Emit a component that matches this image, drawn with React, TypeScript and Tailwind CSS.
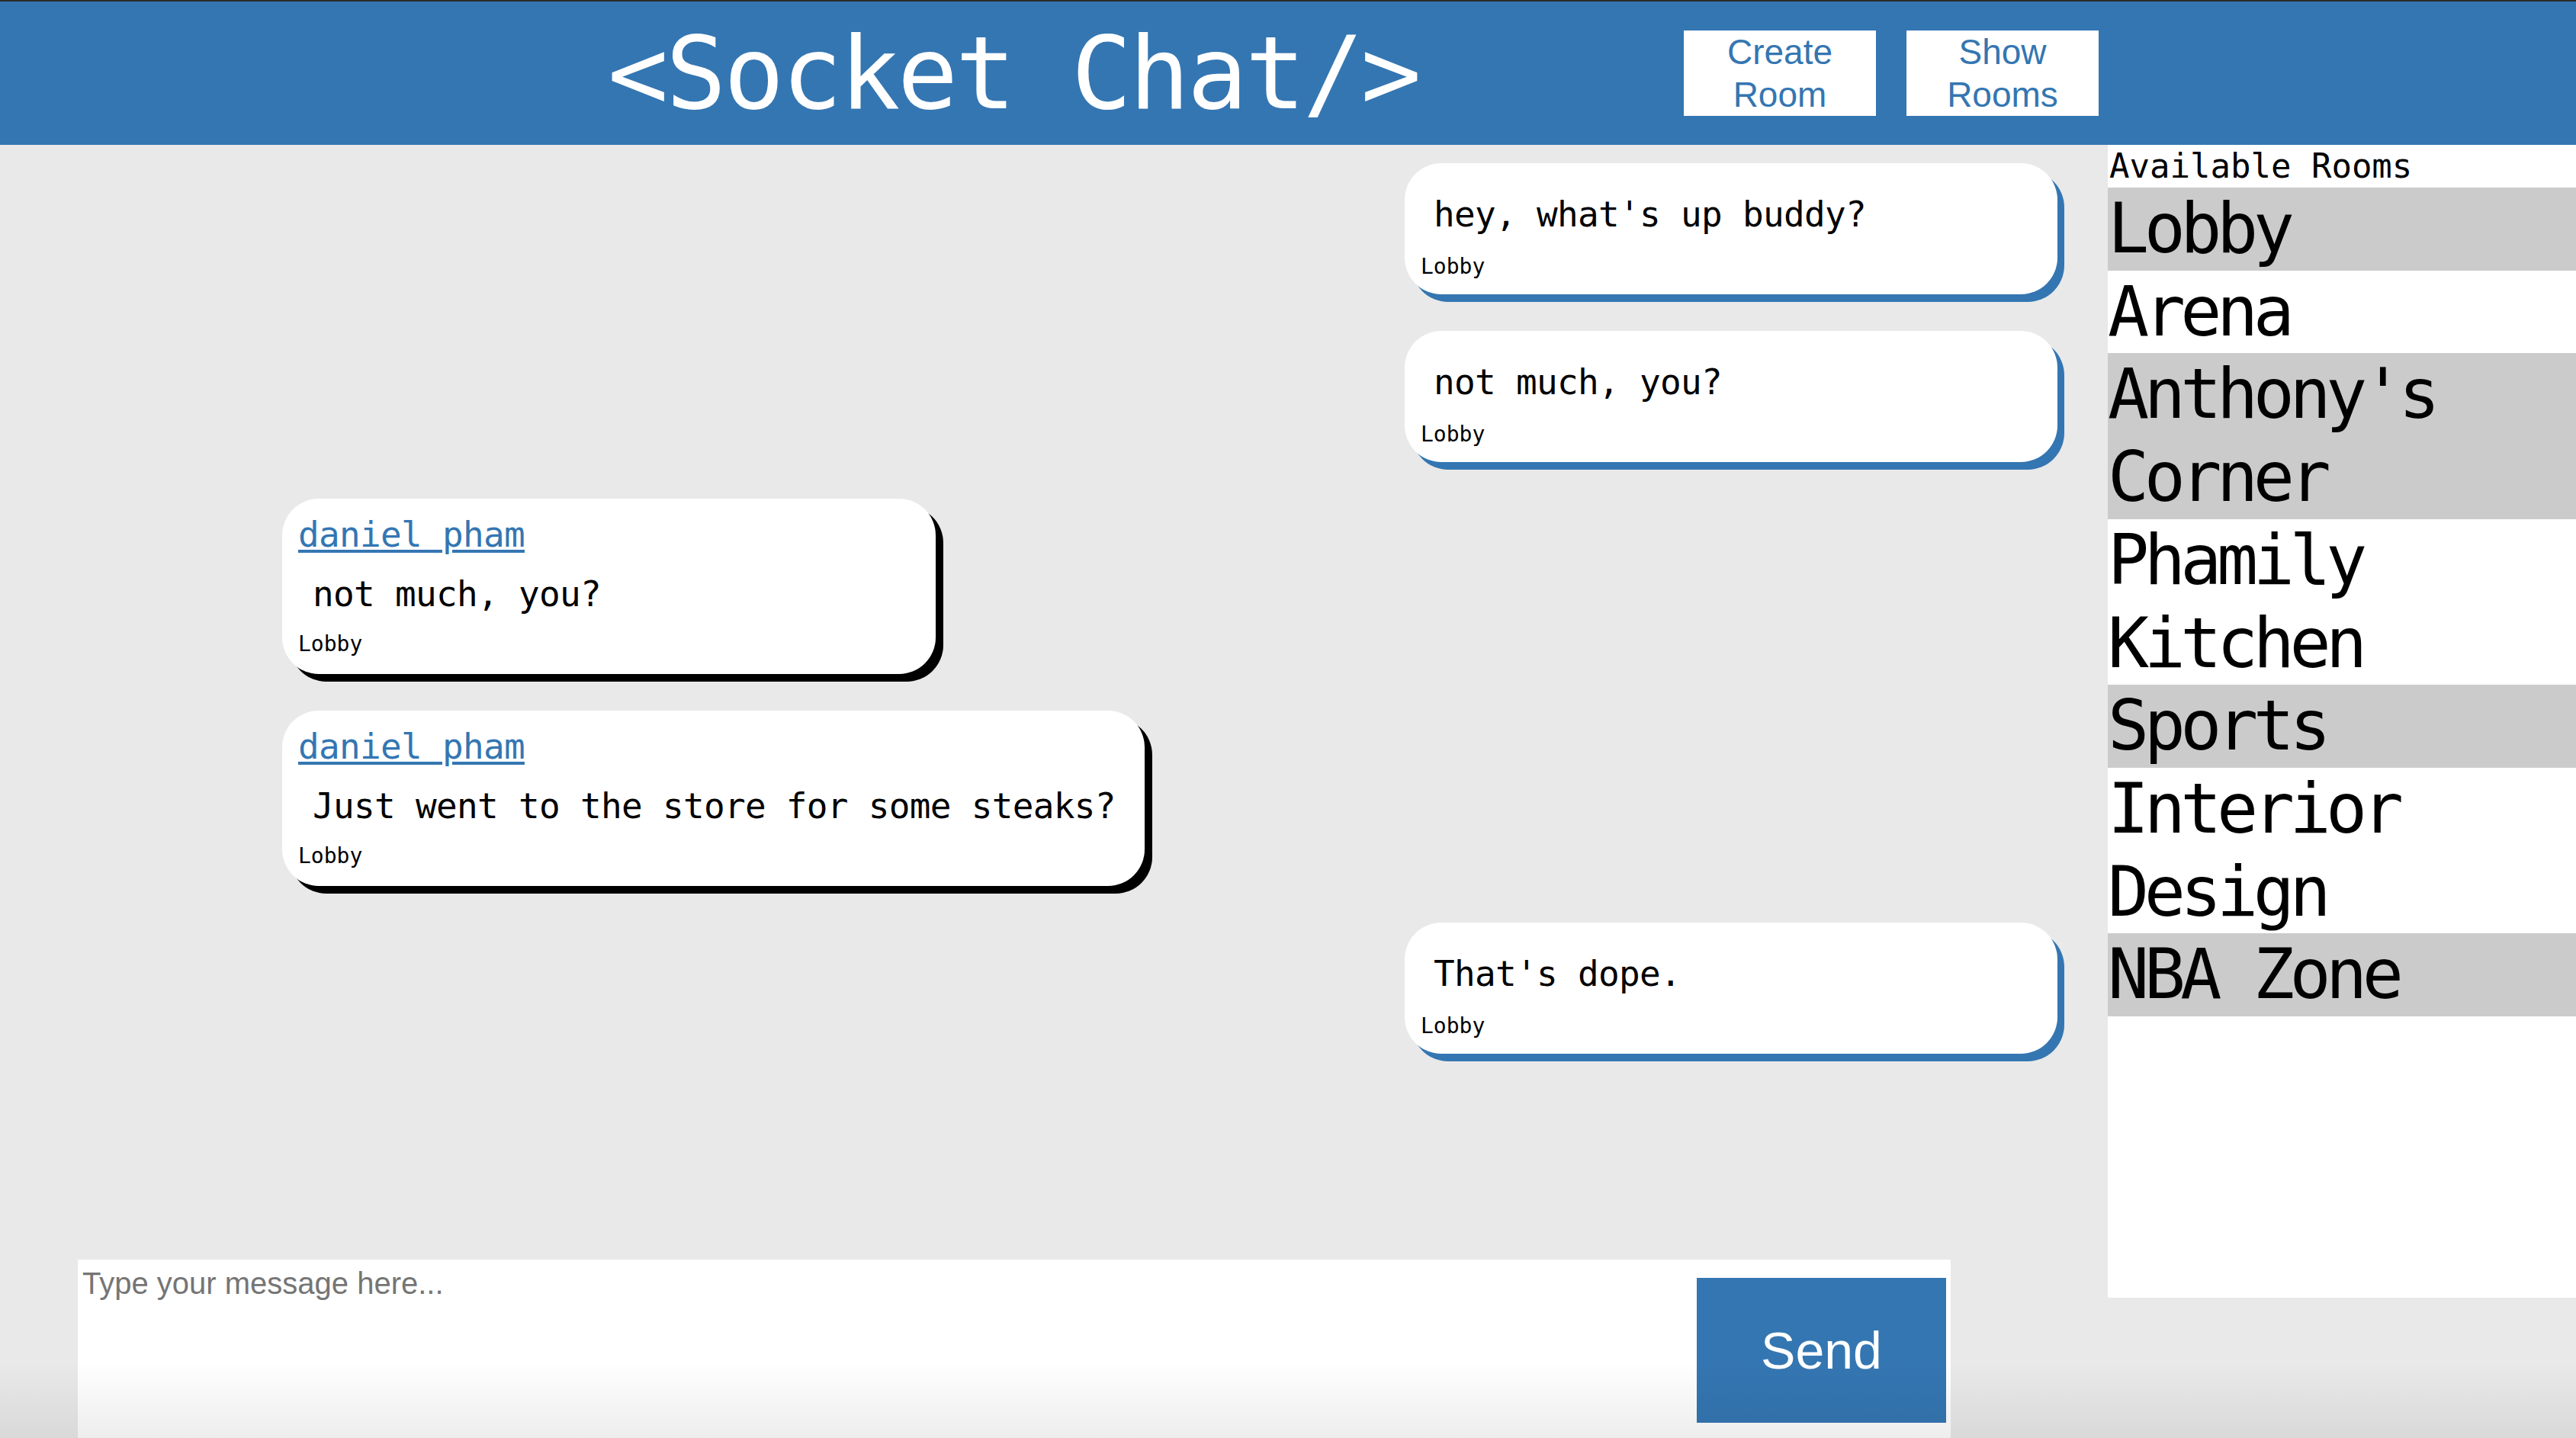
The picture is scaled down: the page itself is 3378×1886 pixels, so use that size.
const rooms = [
  { name: "Lobby", shaded: true },
  { name: "Arena", shaded: false },
  { name: "Anthony's Corner", shaded: true },
  { name: "Phamily Kitchen", shaded: false },
  { name: "Sports", shaded: true },
  { name: "Interior Design", shaded: false },
  { name: "NBA Zone", shaded: true },
];

type Msg = { mine: boolean; user?: string; text: string; room: string };

const messages: Msg[] = [
  { mine: true, text: "hey, what's up buddy?", room: "Lobby" },
  { mine: true, text: "not much, you?", room: "Lobby" },
  { mine: false, user: "daniel pham", text: "not much, you?", room: "Lobby" },
  { mine: false, user: "daniel pham", text: "Just went to the store for some steaks?", room: "Lobby" },
  { mine: true, text: "That's dope.", room: "Lobby" },
];

const mono = "font-['DejaVu_Sans_Mono',monospace]";

function Bubble({ msg }: { msg: Msg }) {
  if (msg.mine) {
    return (
      <div className="self-end mr-[66px] w-[856px] bg-white rounded-[48px] shadow-[9px_10px_0_#3476b2] pl-[21px] pr-[38px] pt-[39px] pb-[19px]">
        <p className="ml-[17px] text-[46px] leading-[56px] tracking-[-0.7px] text-black">{msg.text}</p>
        <p className="mt-[24px] text-[28px] leading-[34px] text-black">{msg.room}</p>
      </div>
    );
  }
  return (
    <div className="self-start ml-[370px] min-w-[857px] bg-white rounded-[48px] shadow-[10px_10px_0_#000] pl-[21px] pr-[38px] pt-[19px] pb-[22px]">
      <a href="#" className="block text-[46px] leading-[56px] tracking-[-0.7px] text-[#3476b2] underline underline-offset-[4px]">
        {msg.user}
      </a>
      <p className="mt-[22px] ml-[19px] text-[46px] leading-[56px] tracking-[-0.7px] text-black whitespace-nowrap">{msg.text}</p>
      <p className="mt-[21px] text-[28px] leading-[34px] text-black">{msg.room}</p>
    </div>
  );
}

export default function App() {
  return (
    <div className={`relative h-[1886px] w-[3378px] overflow-hidden flex flex-col bg-[#e9e9e9] ${mono}`}>
      <header className="h-[190px] shrink-0 border-t-2 border-[#2b2b2b] bg-[#3476b2] flex items-center">
        <h1 className="ml-[797px] w-[1065px] text-[132px] leading-none tracking-[-3.5px] text-white font-normal whitespace-nowrap">
          &lt;Socket Chat/&gt;
        </h1>
        <div className="ml-[346px] flex gap-[40px] font-['Liberation_Sans',Arial,sans-serif]">
          <button className="w-[252px] h-[112px] bg-white text-[#3476b2] text-[46px] leading-[56px]">
            Create
            <br />
            Room
          </button>
          <button className="w-[252px] h-[112px] bg-white text-[#3476b2] text-[46px] leading-[56px]">
            Show
            <br />
            Rooms
          </button>
        </div>
      </header>

      <div className="flex flex-1 min-h-0">
        <main className="w-[2764px] flex flex-col">
          <div className="flex-1 flex flex-col gap-[48px] pt-[24px]">
            {messages.map((m, i) => (
              <Bubble key={i} msg={m} />
            ))}
          </div>
          <div className="ml-[102px] w-[2456px] h-[234px] bg-white flex items-start">
            <textarea
              placeholder="Type your message here..."
              className="flex-1 h-full resize-none outline-none bg-transparent pl-[6px] pt-[8px] text-[40px] leading-[46px] font-['Liberation_Sans',Arial,sans-serif] placeholder:text-[#757575]"
            />
            <button className="mt-[24px] mr-[6px] w-[327px] h-[190px] bg-[#3476b2] text-white text-[68px] font-['Liberation_Sans',Arial,sans-serif]">
              Send
            </button>
          </div>
        </main>

        <aside className="flex-1">
          <div className="h-[1512px] bg-white">
            <div className="pl-[2px] text-[44px] leading-[56px] text-black">Available Rooms</div>
            {rooms.map((r) => (
              <div
                key={r.name}
                className={`text-[90px] leading-[108.7px] tracking-[-6.5px] text-black ${r.shaded ? "bg-[#cbcbcb]" : "bg-white"}`}
              >
                {r.name}
              </div>
            ))}
          </div>
        </aside>
      </div>

      <div className="pointer-events-none absolute inset-x-0 bottom-0 h-[100px] bg-linear-to-b from-transparent to-black/[0.07]" />
    </div>
  );
}
